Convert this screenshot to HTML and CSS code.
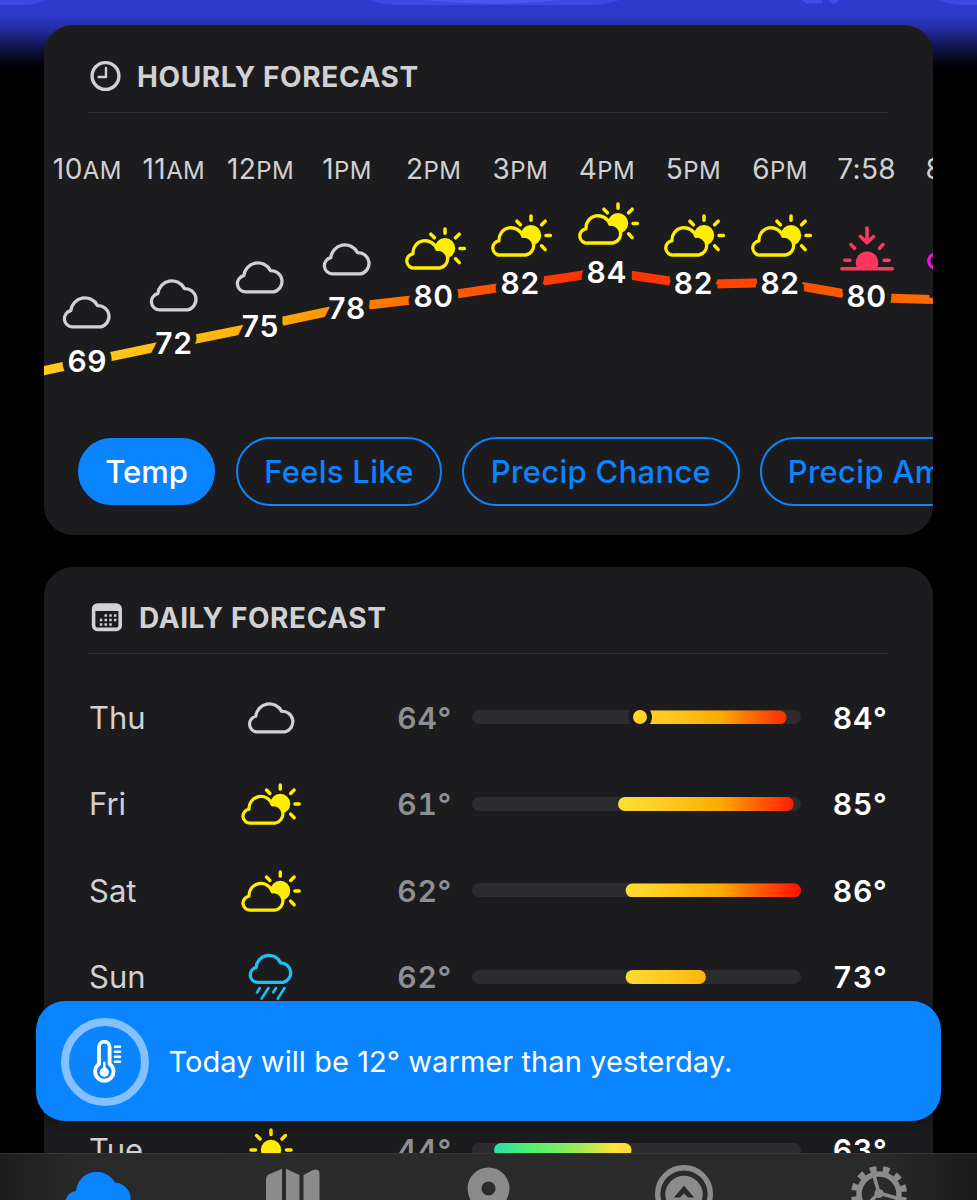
FILE: index.html
```html
<!DOCTYPE html>
<html lang="en">

<head>
    <meta charset="UTF-8">
    <title>Weather</title>
    <link rel="stylesheet" href="styles.css">
</head>

<body>
    <!-- Shared icons -->
    <svg class="sprite" aria-hidden="true">
        <symbol id="cloud" viewBox="0 0 50 34">
            <path class="outline" d="M10.3 31.9 A8.2 8.2 0 0 1 8.8 15.7 A14.1 14.1 0 0 1 35.4 10.6 A10.8 10.8 0 0 1 38.6 31.9 Z" />
        </symbol>
        <symbol id="partly" viewBox="0 0 60 43">
            <circle cx="39" cy="21.3" r="10.2" fill="currentColor" />
            <path class="rays" d="M39 2 V6.3 M53.2 7.2 L49.6 10.8 M54 21.5 H58.4 M49.6 31.8 L53.2 35.6 M24.9 7.2 L28.4 10.8" />
            <path class="outline filled" d="M8.8 41 A7.1 7.1 0 0 1 7 26.9 A12.2 12.2 0 0 1 30.8 22.3 A9.4 9.4 0 0 1 33.6 41 Z" />
        </symbol>
        <symbol id="rain" viewBox="0 0 47 47">
            <path class="outline" d="M9.6 29.4 A7.6 7.6 0 0 1 8.2 14.4 A12.8 12.8 0 0 1 32.6 9.8 A10 10 0 0 1 35.5 29.4 Z" />
            <path class="drops" d="M11.8 35 L9 39.5 M20.5 35 L13.5 45.7 M28 35 L25.2 39.5 M36.5 35 L29.7 45.7" />
        </symbol>
        <symbol id="sun" viewBox="0 0 44 44">
            <circle cx="22" cy="22" r="10.2" fill="currentColor" />
            <path class="rays" d="M22 2 V6.5 M22 37.5 V42 M2 22 H6.5 M37.5 22 H42 M7.6 7.6 L11 11 M33 33 L36.4 36.4 M36.4 7.6 L33 11 M11 33 L7.6 36.4" />
        </symbol>
        <symbol id="sunset" viewBox="0 0 54 45">
            <path d="M17 42 A11.3 11.3 0 1 1 37 42 Z" fill="currentColor" />
            <path class="rays" d="M27 2 V15.5 M20.5 10.5 L27 16.8 L33.5 10.5 M11 18.5 L14.5 22.3 M43 18.5 L39.5 22.3 M4.8 34.2 H10 M44 34.2 H49.2 M1.8 42.8 H52.2" />
        </symbol>
    </svg>

    <!-- Bottom edge of the radar map behind the cards -->
    <svg class="map-edge" viewBox="0 0 977 70">
        <path d="M0 0 H46 Q34 5 22 5 H0 Z" fill="#3a49e4" />
        <path d="M370 0 H620 Q604 5 592 5 H395 Q380 4 370 0 Z" fill="#3a49e4" />
        <path d="M425 0 H560 Q530 3.5 492 3.5 Q450 3 425 0 Z" fill="#4757f5" />
        <path d="M802 0 H822 V3.5 H806 Z M829 0 H839 L834 4.5 Z" fill="#3f4dea" />
        <path d="M938 0 H977 V5 H962 Q948 4 938 0 Z" fill="#3a49e4" />
    </svg>

    <div class="content">
        <section class="card">
            <header class="card-header">
                <svg class="header-icon" width="32" height="32" viewBox="0 0 32 32">
                    <circle cx="16.5" cy="16" r="13.4" fill="none" stroke="currentColor" stroke-width="3.4" />
                    <path d="M17 8 V17 H9.7" fill="none" stroke="currentColor" stroke-width="2.4" stroke-linecap="round" stroke-linejoin="round" />
                </svg>
                <h2>HOURLY FORECAST</h2>
            </header>

            <div class="hourly">
                <svg class="temp-line" viewBox="0 0 889 324">
                    <defs>
                        <linearGradient id="heat" gradientUnits="userSpaceOnUse" x1="0" y1="0" x2="889" y2="0">
                            <stop offset="0" stop-color="#ffca20" />
                            <stop offset="0.15" stop-color="#ffbe14" />
                            <stop offset="0.25" stop-color="#ffb00a" />
                            <stop offset="0.34" stop-color="#ff8800" />
                            <stop offset="0.44" stop-color="#ff6400" />
                            <stop offset="0.535" stop-color="#ff4600" />
                            <stop offset="0.63" stop-color="#ff2a00" />
                            <stop offset="0.73" stop-color="#ff4000" />
                            <stop offset="0.83" stop-color="#ff4800" />
                            <stop offset="0.92" stop-color="#ff6200" />
                            <stop offset="1" stop-color="#ff6a00" />
                        </linearGradient>
                    </defs>
                    <polyline points="-44,267 43,248.5 129.6,230.5 216,213 303,194.5 389,184.5 476,171.5 562,158.5 649,171.5 736,169.5 822,184.5 909,187" />
                </svg>
                <!-- Each stack is pushed down by its distance from the daily high -->
                <div class="hour">
                    <div class="time">10<small>AM</small></div>
                    <div class="stack" style="padding-top: 100px">
                        <svg class="icon cloud"><use href="#cloud" /></svg>
                        <div class="temp">69</div>
                    </div>
                </div>
                <div class="hour">
                    <div class="time">11<small>AM</small></div>
                    <div class="stack" style="padding-top: 82.5px">
                        <svg class="icon cloud"><use href="#cloud" /></svg>
                        <div class="temp">72</div>
                    </div>
                </div>
                <div class="hour">
                    <div class="time">12<small>PM</small></div>
                    <div class="stack" style="padding-top: 65px">
                        <svg class="icon cloud"><use href="#cloud" /></svg>
                        <div class="temp">75</div>
                    </div>
                </div>
                <div class="hour">
                    <div class="time">1<small>PM</small></div>
                    <div class="stack" style="padding-top: 47px">
                        <svg class="icon cloud"><use href="#cloud" /></svg>
                        <div class="temp">78</div>
                    </div>
                </div>
                <div class="hour">
                    <div class="time">2<small>PM</small></div>
                    <div class="stack" style="padding-top: 35.5px">
                        <svg class="icon partly"><use href="#partly" /></svg>
                        <div class="temp">80</div>
                    </div>
                </div>
                <div class="hour">
                    <div class="time">3<small>PM</small></div>
                    <div class="stack" style="padding-top: 22.5px">
                        <svg class="icon partly"><use href="#partly" /></svg>
                        <div class="temp">82</div>
                    </div>
                </div>
                <div class="hour">
                    <div class="time">4<small>PM</small></div>
                    <div class="stack" style="padding-top: 11px">
                        <svg class="icon partly"><use href="#partly" /></svg>
                        <div class="temp">84</div>
                    </div>
                </div>
                <div class="hour">
                    <div class="time">5<small>PM</small></div>
                    <div class="stack" style="padding-top: 22.5px">
                        <svg class="icon partly"><use href="#partly" /></svg>
                        <div class="temp">82</div>
                    </div>
                </div>
                <div class="hour">
                    <div class="time">6<small>PM</small></div>
                    <div class="stack" style="padding-top: 22.5px">
                        <svg class="icon partly"><use href="#partly" /></svg>
                        <div class="temp">82</div>
                    </div>
                </div>
                <div class="hour">
                    <div class="time">7:58</div>
                    <div class="stack" style="padding-top: 35.5px">
                        <svg class="icon sunset"><use href="#sunset" /></svg>
                        <div class="temp">80</div>
                    </div>
                </div>
                <div class="hour">
                    <div class="time">8<small>PM</small></div>
                    <div class="stack" style="padding-top: 38px">
                        <svg class="icon night" viewBox="0 0 50 43">
                            <path class="outline" d="M8.8 39 A7.1 7.1 0 0 1 7 24.9 A12.2 12.2 0 0 1 30.8 20.3 A9.4 9.4 0 0 1 33.6 39 Z" />
                        </svg>
                        <div class="temp">79</div>
                    </div>
                </div>
            </div>

            <div class="chips">
                <button class="chip active">Temp</button>
                <button class="chip feels">Feels Like</button>
                <button class="chip chance">Precip Chance</button>
                <button class="chip amount">Precip Amount</button>
            </div>
        </section>

        <section class="card daily">
            <header class="card-header">
                <svg class="header-icon" width="34" height="32" viewBox="0 0 34 32">
                    <rect x="4.6" y="4" width="26.6" height="24.4" rx="4" fill="none" stroke="currentColor" stroke-width="3.6" />
                    <path d="M4.5 4 H31 V10 H4.5 Z" fill="currentColor" />
                    <path d="M15.5 14.4 H27.5 M10.8 18.9 H27.5 M10.8 23.4 H23" stroke="currentColor" stroke-width="2.5" stroke-dasharray="2.5 2.2" />
                </svg>
                <h2>DAILY FORECAST</h2>
            </header>

            <div class="days">
                <div class="day">
                    <span class="name">Thu</span>
                    <svg class="icon day-cloud"><use href="#cloud" /></svg>
                    <span class="low">64°</span>
                    <div class="track">
                        <div class="range" style="clip-path: inset(0 4.4% 0 51.1% round 7px)"></div>
                        <span class="now" style="left: 51.1%"></span>
                    </div>
                    <span class="high">84°</span>
                </div>
                <div class="day">
                    <span class="name">Fri</span>
                    <svg class="icon day-partly"><use href="#partly" /></svg>
                    <span class="low">61°</span>
                    <div class="track">
                        <div class="range" style="clip-path: inset(0 2.2% 0 44.4% round 7px)"></div>
                    </div>
                    <span class="high">85°</span>
                </div>
                <div class="day">
                    <span class="name">Sat</span>
                    <svg class="icon day-partly"><use href="#partly" /></svg>
                    <span class="low">62°</span>
                    <div class="track">
                        <div class="range" style="clip-path: inset(0 0% 0 46.7% round 7px)"></div>
                    </div>
                    <span class="high">86°</span>
                </div>
                <div class="day">
                    <span class="name">Sun</span>
                    <svg class="icon day-rain"><use href="#rain" /></svg>
                    <span class="low">62°</span>
                    <div class="track">
                        <div class="range" style="clip-path: inset(0 28.9% 0 46.7% round 7px)"></div>
                    </div>
                    <span class="high">73°</span>
                </div>
                <div class="day"></div>
                <div class="day">
                    <span class="name">Tue</span>
                    <svg class="icon day-sun"><use href="#sun" /></svg>
                    <span class="low">44°</span>
                    <div class="track">
                        <div class="range" style="clip-path: inset(0 51.5% 0 6.7% round 7px)"></div>
                    </div>
                    <span class="high">63°</span>
                </div>
            </div>
        </section>
    </div>

    <!-- Notice over the list -->
    <div class="notice">
        <div class="notice-icon">
            <svg width="30" height="44" viewBox="0 0 30 44">
                <path d="M6 24 V7 A5.3 5.3 0 0 1 16.6 7 V24 A9.2 9.2 0 1 1 6 24 Z" fill="none" stroke="#fff" stroke-width="3.8" />
                <path d="M11.3 23 V32" stroke="#fff" stroke-width="2.6" stroke-linecap="round" />
                <circle cx="11.3" cy="32.2" r="4.6" fill="#fff" />
                <path d="M22 6.8 H27 M22 11.8 H27 M22 16.8 H27 M22 21.8 H27" stroke="#fff" stroke-width="2.6" stroke-linecap="round" />
            </svg>
        </div>
        <p>Today will be 12° warmer than yesterday.</p>
    </div>

    <!-- Tab bar -->
    <nav class="tabs">
        <a class="tab active">
            <svg width="70" height="46" viewBox="0 0 70 46">
                <path d="M2.5 46 Q5 38 13 37 A20.8 20.8 0 0 1 52 28.6 A16.5 16.5 0 0 1 67.5 46 Z" fill="currentColor" />
            </svg>
        </a>
        <a class="tab">
            <svg width="54" height="46" viewBox="0 0 54 46">
                <path d="M0 46 V25 Q0 22 2.5 20.5 L16 14.8 V46 Z M20 14.8 L33.5 21 V46 H20 Z M37.5 21 L47 16 Q53.5 14 53.5 20 V46 H37.5 Z" fill="currentColor" />
            </svg>
        </a>
        <a class="tab">
            <svg width="46" height="46" viewBox="0 0 46 46">
                <path fill-rule="evenodd" d="M22.5 13.5 A21 21 0 0 1 43.5 34.5 Q43.5 40 40.5 46 H4.5 Q1.5 40 1.5 34.5 A21 21 0 0 1 22.5 13.5 Z M22.5 27.5 A7 7 0 1 0 22.5 41.5 A7 7 0 1 0 22.5 27.5 Z" fill="currentColor" />
            </svg>
        </a>
        <a class="tab">
            <svg width="60" height="46" viewBox="0 0 60 46">
                <circle cx="30" cy="40" r="26.3" fill="none" stroke="currentColor" stroke-width="5.4" />
                <circle cx="30" cy="40.5" r="18.7" fill="currentColor" />
                <path d="M19.8 43.5 L30 31.7 L40.2 43.5 H34 L30 39.3 L26 43.5 Z" fill="#2a2a2b" />
            </svg>
        </a>
        <a class="tab">
            <svg width="58" height="46" viewBox="0 0 58 46">
                <circle cx="29" cy="40" r="20" fill="none" stroke="currentColor" stroke-width="5.5" />
                <circle cx="29" cy="40" r="25" fill="none" stroke="currentColor" stroke-width="6" stroke-dasharray="6.5 6.59" stroke-dashoffset="-3.3" />
                <path d="M29 39 L23.5 20 M29 39 L48 44.5 M29 39 L16 52" stroke="currentColor" stroke-width="3.6" />
                <circle cx="29" cy="39.5" r="4.6" fill="currentColor" />
            </svg>
        </a>
    </nav>
</body>

</html>
```

FILE: styles.css
```css
/* Basic styling */
* {
    box-sizing: border-box;
}

body {
    font-family: Inter, "Liberation Sans", sans-serif;
    margin: 0;
    padding: 0;
    height: 1200px;
    position: relative;
    overflow: hidden;
    color: #d1d1d3;
    background: linear-gradient(#2c3ccd 0, #2b39c8 16px, #2830ac 26px, #161a62 42px, #07081f 58px, #000 69px);
    background-color: black;
    background-repeat: no-repeat;
}

h2,
p {
    margin: 0;
}

svg {
    display: block;
    flex: none;
}

.sprite {
    position: absolute;
    width: 0;
    height: 0;
}

.map-edge {
    position: absolute;
    top: 0;
    left: 0;
    width: 977px;
    height: 70px;
    z-index: -1;
}

/* Weather icons */
.icon,
symbol {
    overflow: visible;
}

.outline {
    fill: none;
    stroke: currentColor;
    stroke-width: 3.3;
    stroke-linejoin: round;
}

.filled {
    fill: #1c1c1e;
}

.rays {
    fill: none;
    stroke: currentColor;
    stroke-width: 3.5;
    stroke-linecap: round;
    stroke-linejoin: round;
}

.drops {
    stroke: currentColor;
    stroke-width: 2.6;
    stroke-linecap: round;
}

/* Cards */
.content {
    padding: 25px 44px 0;
}

.card {
    width: 888.5px;
    height: 510.3px;
    background: #1c1c1e;
    border-radius: 29px;
    overflow: hidden;
}

.card.daily {
    margin-top: 31.4px;
    height: 633px;
}

.card-header {
    display: flex;
    align-items: center;
    height: 88px;
    margin: 0 45px;
    padding-top: 15px;
    border-bottom: 1px solid #303032;
}

.daily .card-header {
    height: 87px;
}

.card-header h2 {
    font-size: 28px;
    font-weight: 700;
    letter-spacing: 0.6px;
    line-height: 34px;
    margin-left: 16px;
    padding-top: 1px;
    white-space: nowrap;
}

/* Hourly forecast */
.hourly {
    display: flex;
    height: 324px;
    padding-top: 40px;
    position: relative;
    isolation: isolate;
}

.temp-line {
    position: absolute;
    top: 0;
    left: 0;
    width: 889px;
    height: 324px;
    z-index: -1;
}

.temp-line polyline {
    fill: none;
    stroke: url(#heat);
    stroke-width: 9;
}

.hour {
    flex: 0 0 86.6px;
}

.time {
    height: 32px;
    font-size: 28px;
    letter-spacing: 0.4px;
    line-height: 32px;
    text-align: center;
    white-space: nowrap;
}

.time small {
    font-size: 24px;
    line-height: 1;
}

.stack {
    display: flex;
    flex-direction: column;
    align-items: center;
}

.icon.cloud {
    width: 50px;
    height: 34px;
    margin: 10px 0 15.5px;
}

.icon.partly {
    width: 60px;
    height: 43px;
    margin: 6px 0 10.5px 4px;
    color: #ffee00;
}

.icon.sunset {
    width: 54px;
    height: 45px;
    margin: 5px 0 9.5px;
    color: #ff375f;
}

.icon.night {
    width: 50px;
    height: 43px;
    margin: 6px 0 10.5px;
    color: #e815e0;
}

.temp {
    font-size: 30px;
    font-weight: 600;
    line-height: 32px;
    letter-spacing: 0.7px;
    color: white;
    -webkit-text-stroke: 13px #1c1c1e;
    paint-order: stroke fill;
}

/* Metric picker */
.chips {
    display: flex;
    align-items: center;
    gap: 20px;
    padding-left: 34px;
    height: 68px;
}

.chip {
    flex: none;
    height: 69px;
    padding: 0;
    border: 2px solid #0a84ff;
    border-radius: 35px;
    background: none;
    color: #0a84ff;
    font-family: inherit;
    font-size: 31px;
    font-weight: 500;
    letter-spacing: 0.3px;
    white-space: nowrap;
}

.chip.active {
    width: 137px;
    height: 67px;
    margin-right: 1px;
    background: #0a84ff;
    color: white;
    letter-spacing: 0;
}

.chip.feels {
    width: 206px;
}

.chip.chance {
    width: 278px;
}

.chip.amount {
    width: 278px;
}

/* Daily forecast */
.days {
    padding: 20.5px 45px 0;
}

.day {
    display: grid;
    grid-template-columns: 153px 60px 150px 329px 1fr;
    align-items: center;
    height: 86.5px;
}

.name {
    font-size: 31px;
}

.icon.day-cloud {
    width: 49px;
    height: 33px;
    margin-left: 5px;
}

.icon.day-partly {
    width: 59px;
    height: 42px;
    margin-top: 1px;
}

.icon.day-rain {
    width: 47px;
    height: 47px;
    margin-left: 6px;
    color: #1fc0f5;
}

.icon.day-sun {
    width: 44px;
    height: 44px;
    margin: 1px 0 0 7px;
}

.day-partly,
.day-sun {
    color: #ffee00;
}

.low,
.high {
    padding-top: 1px;
    font-size: 30px;
    font-weight: 600;
    font-variant-numeric: tabular-nums;
    letter-spacing: 0.7px;
    text-align: right;
}

.low {
    color: #8e8e93;
}

.high {
    color: white;
}

.track {
    position: relative;
    left: 20px;
    height: 14px;
    border-radius: 7px;
    background: #2c2c2e;
}

.range {
    height: 14px;
    background: linear-gradient(to right, #26e0ac 6%, #4cf070 17%, #7aee60 27%, #b4e750 35%, #fde23a 43%, #ffc81e 60%, #fbaa00 76%, #fe7800 83%, #ff4000 92%, #ff1000 100%);
}

.now {
    position: absolute;
    top: -5px;
    width: 24px;
    height: 24px;
    margin-left: -12px;
    border: 5px solid #1c1c1e;
    border-radius: 50%;
    background: #ffd52c;
}

/* Notice */
.notice {
    position: absolute;
    top: 1001px;
    left: 36px;
    width: 905px;
    height: 119.5px;
    display: flex;
    align-items: center;
    padding: 2px 25px 0;
    border-radius: 29px;
    background: #0a84ff;
    color: white;
    box-shadow: 0 4px 16px rgba(0, 0, 0, 0.3);
}

.notice-icon {
    display: flex;
    align-items: center;
    justify-content: center;
    width: 88px;
    height: 88px;
    padding-left: 5px;
    border: 8px solid #85c1ff;
    border-radius: 50%;
}

.notice p {
    margin-left: 19.5px;
    font-size: 29px;
    letter-spacing: 0.07px;
    white-space: nowrap;
}

/* Tab bar */
.tabs {
    position: absolute;
    top: 1153px;
    left: 0;
    display: flex;
    width: 977px;
    height: 47px;
    border-top: 1px solid #363637;
    background: linear-gradient(to right, #1d1d1e, #29292a 8%, #2b2b2b 50%, #2a2a2b 90%, #1a1a1b);
    overflow: hidden;
}

.tab {
    flex: 1;
    display: flex;
    justify-content: center;
    color: #8b8b8b;
}

.tab.active {
    color: #0a84ff;
}
```
